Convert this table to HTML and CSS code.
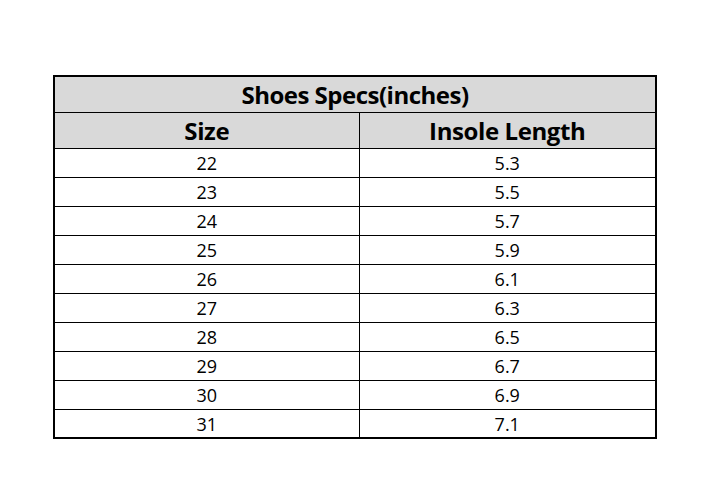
FILE: index.html
```html
<!DOCTYPE html>
<html>
<head>
<meta charset="utf-8">
<link rel="stylesheet" href="styles.css">
</head>
<body>
<div class="page">
<table class="specs">
<colgroup><col class="col-size"><col class="col-len"></colgroup>
<thead>
<tr class="title-row"><th colspan="2">Shoes Specs(inches)</th></tr>
<tr class="head-row"><th>Size</th><th>Insole Length</th></tr>
</thead>
<tbody>
<tr><td>22</td><td>5.3</td></tr>
<tr><td>23</td><td>5.5</td></tr>
<tr><td>24</td><td>5.7</td></tr>
<tr><td>25</td><td>5.9</td></tr>
<tr><td>26</td><td>6.1</td></tr>
<tr><td>27</td><td>6.3</td></tr>
<tr><td>28</td><td>6.5</td></tr>
<tr><td>29</td><td>6.7</td></tr>
<tr><td>30</td><td>6.9</td></tr>
<tr><td>31</td><td>7.1</td></tr>
</tbody>
</table>
</div>
</body>
</html>
```
FILE: styles.css
```css
html, body {
  margin: 0;
  padding: 0;
  background: #ffffff;
}
.page {
  padding: 75px 0 0 53px;
}
.specs {
  border-collapse: collapse;
  width: 604px;
  border: 2px solid #000;
  font-family: "Open Sans", "Liberation Sans", sans-serif;
  color: #000;
  table-layout: fixed;
}
.specs th, .specs td {
  border: 1px solid #000;
  padding: 0;
  text-align: center;
}
.title-row th {
  background: #d9d9d9;
  height: 35px;
  font-size: 24px;
  font-weight: 700;
  letter-spacing: -0.5px;
}
.head-row th {
  background: #d9d9d9;
  height: 35px;
  font-size: 24px;
  font-weight: 700;
  letter-spacing: -0.4px;
}
.col-size { width: 305px; }
.specs td {
  height: 28px;
  font-size: 18px;
  font-weight: 400;
}
.specs tbody tr:last-child td { height: 27px; }
```
